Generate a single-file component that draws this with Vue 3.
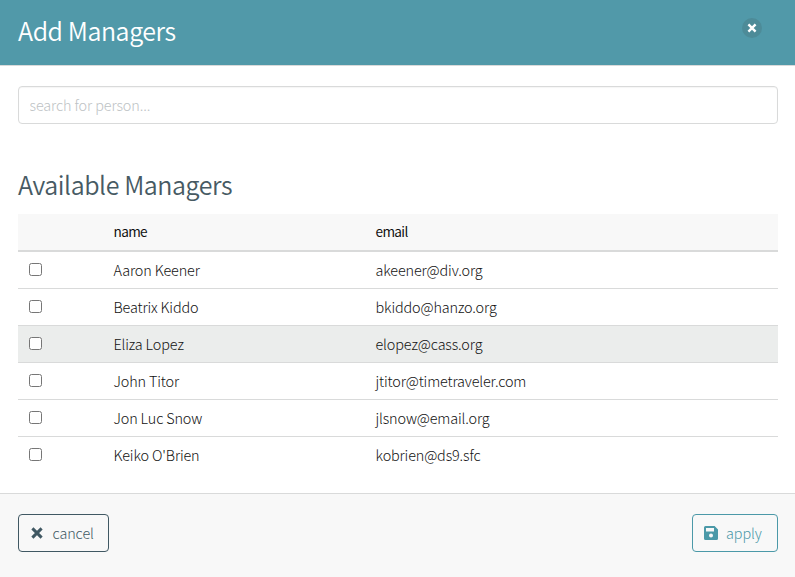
<script setup>
import { ref } from 'vue'

const search = ref('')
const selected = ref([])
const people = [
  { name: 'Aaron Keener', email: 'akeener@div.org' },
  { name: 'Beatrix Kiddo', email: 'bkiddo@hanzo.org' },
  { name: 'Eliza Lopez', email: 'elopez@cass.org', active: true },
  { name: 'John Titor', email: 'jtitor@timetraveler.com' },
  { name: 'Jon Luc Snow', email: 'jlsnow@email.org' },
  { name: "Keiko O'Brien", email: 'kobrien@ds9.sfc' },
]
</script>

<template>
  <div class="modal">
    <header class="head">
      <h1 class="title">Add Managers</h1>
      <button class="close" type="button">
        <svg width="10" height="10" viewBox="0 0 12 12"><path d="M1.7 1.7 10.3 10.3M10.3 1.7 1.7 10.3" stroke="currentColor" stroke-width="2.9" /></svg>
      </button>
    </header>
    <main class="body">
      <input v-model="search" class="search" type="text" placeholder="search for person..." />
      <h2 class="subtitle">Available Managers</h2>
      <div class="table">
        <div class="row row-head"><span></span><span>name</span><span>email</span></div>
        <div v-for="p in people" :key="p.email" class="row" :class="{ active: p.active }">
          <input v-model="selected" class="check" type="checkbox" :value="p.email" />
          <span>{{ p.name }}</span>
          <span>{{ p.email }}</span>
        </div>
      </div>
    </main>
    <footer class="foot">
      <button class="btn cancel" type="button">
        <svg width="12" height="12" viewBox="0 0 12 12"><path d="M1.4 1.4 10.6 10.6M10.6 1.4 1.4 10.6" stroke="currentColor" stroke-width="3" /></svg>
        <span>cancel</span>
      </button>
      <button class="btn apply" type="button">
        <svg width="14" height="14" viewBox="0 0 14 14"><path fill="currentColor" fill-rule="evenodd" d="M1.5 0H10.6L14 3.4V12.5Q14 14 12.5 14H1.5Q0 14 0 12.5V1.5Q0 0 1.5 0ZM2 2V5.5H10V2ZM7 7.6A2 2 0 1 0 7 11.6A2 2 0 1 0 7 7.6Z" /></svg>
        <span>apply</span>
      </button>
    </footer>
  </div>
</template>

<style>
body {
  background: #fff;
}
</style>

<style scoped>
.modal {
  box-sizing: border-box;
  height: 577px;
  display: flex;
  flex-direction: column;
  font-family: "Source Sans Pro", "Noto Sans CJK SC", sans-serif;
  font-weight: 300;
  font-size: 14.4px;
  letter-spacing: -0.14px;
  color: #111;
}
.head {
  box-sizing: border-box;
  height: 66px;
  flex: none;
  display: flex;
  justify-content: space-between;
  align-items: flex-start;
  padding: 14px 33px 0 18px;
  background: #5199a9;
  border-bottom: 1px solid #d9dada;
}
.title,
.subtitle {
  margin: 0;
  font-size: 25px;
  font-weight: 350;
  letter-spacing: -0.42px;
  line-height: 32px;
}
.title {
  color: #fff;
}
.close {
  display: flex;
  align-items: center;
  justify-content: center;
  width: 20px;
  height: 20px;
  margin-top: 4px;
  padding: 0;
  border: 0;
  border-radius: 50%;
  background: #4d8b98;
  color: #fff;
}
.body {
  flex: 1;
  padding: 20px 17px 0 18px;
}
.search {
  display: block;
  box-sizing: border-box;
  width: 100%;
  height: 38px;
  padding: 0 10.5px 2px;
  border: 1px solid #d9dada;
  border-radius: 4px;
  box-shadow: inset 0 1px 1px rgba(0, 0, 0, 0.04);
  font: inherit;
  letter-spacing: -0.1px;
}
.search::placeholder {
  color: #bdc2c4;
}
.subtitle {
  margin-top: 44px;
  color: #475a63;
}
.table {
  margin-top: 14px;
}
.row {
  display: grid;
  grid-template-columns: 84.5px 262px 1fr;
  align-items: center;
  height: 36px;
  padding-left: 11px;
  line-height: 24px;
}
.row + .row {
  border-top: 1px solid #d9dada;
}
.row-head {
  background: #f8f8f8;
  font-weight: 400;
  letter-spacing: -0.65px;
}
.row-head span {
  padding-bottom: 3px;
  font-size: 13.6px;
}
.row-head + .row {
  border-top-width: 2px;
}
.row.active {
  background: #ebedec;
}
.check {
  width: 13px;
  height: 13px;
  margin: 0 0 1px;
}
.foot {
  box-sizing: border-box;
  height: 84px;
  flex: none;
  display: flex;
  justify-content: space-between;
  align-items: flex-start;
  padding: 20px 17px 0 18px;
  background: #f8f8f8;
  border-top: 1px solid #d9dada;
}
.btn {
  box-sizing: border-box;
  display: flex;
  align-items: center;
  height: 38px;
  padding: 0;
  border: 1px solid currentColor;
  border-radius: 4px;
  background: transparent;
  font: inherit;
  letter-spacing: -0.1px;
}
.btn svg {
  margin-bottom: 1px;
}
.btn span {
  padding-bottom: 1px;
  line-height: 24px;
}
.cancel {
  width: 91px;
  padding-left: 12px;
  gap: 9.5px;
  color: #405863;
}
.apply {
  width: 86px;
  padding-left: 11px;
  gap: 8px;
  color: #4b99a8;
}
</style>
